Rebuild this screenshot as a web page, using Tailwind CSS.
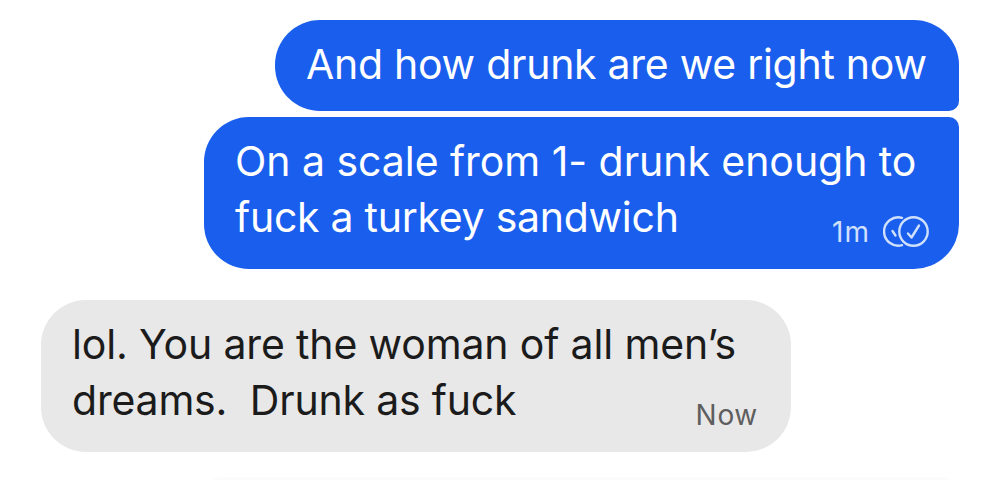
<!DOCTYPE html>
<html lang="en">
<head>
  <meta charset="UTF-8" />
  <meta name="viewport" content="width=device-width, initial-scale=1" />
  <title>Messages</title>
  <script src="https://cdn.jsdelivr.net/npm/@tailwindcss/browser@4"></script>
</head>
<body class="bg-white font-['Inter',sans-serif] text-[41px] leading-[56px] w-[1000px] h-[480px] overflow-hidden">
  <main class="flex flex-col pt-5 px-[41px]">
    <!-- Sent -->
    <section class="flex flex-col items-end gap-[6px] text-white">
      <div class="w-[684px] h-[91px] bg-[#1a5eed] rounded-[45px] rounded-br-[10px] pl-[31px] pt-[16px] whitespace-nowrap">
        <p class="tracking-[-0.27px]">And how drunk are we right now</p>
      </div>
      <div class="w-[755px] h-[152px] bg-[#1a5eed] rounded-[45px] rounded-tr-[10px] pl-[31px] pr-[29px] pt-[16px] whitespace-nowrap">
        <p class="tracking-[-0.05px]">On a scale from 1- drunk enough to</p>
        <div class="flex justify-between">
          <p class="tracking-[-0.27px]">fuck a turkey sandwich</p>
          <div class="flex items-center gap-[13px] pt-[29px] text-[28px] leading-[30px] h-[56px] text-[#cfe0fc]">
            <span class="tracking-[1px]">1m</span>
            <svg class="w-[47px] h-[32px]" viewBox="0 0 47 32" fill="none" stroke="currentColor" stroke-width="2.4" stroke-linecap="round" stroke-linejoin="round">
              <circle cx="30.500" cy="15.500" r="14.2" />
              <path d="M25 17.500l3.500 4 7.500-12" />
              <path d="M19 1.800a14.200 14.200 0 1 0 0 27.400" />
              <path d="M9.500 15l3 4.500" />
            </svg>
          </div>
        </div>
      </div>
    </section>
    <!-- Received -->
    <section class="mt-[31px] w-[750px] h-[152px] bg-[#e8e8e8] rounded-[45px] pl-[31px] pr-[33px] pt-[16px] text-[#1b1b1b]">
      <p class="tracking-[-0.15px] whitespace-nowrap">lol. You are the woman of all men’s</p>
      <div class="flex justify-between">
        <p class="tracking-[-0.2px] whitespace-pre">dreams.  Drunk as fuck</p>
        <span class="pt-[28px] text-[28px] leading-[30px] tracking-[0.7px] text-[#5e5e5e]">Now</span>
      </div>
    </section>
    <!-- Top edge of the composer -->
    <div class="mt-[25px] ml-[170px] w-[740px] h-2 shrink-0 bg-[#fcfcfc] rounded-t-lg"></div>
  </main>
</body>
</html>
